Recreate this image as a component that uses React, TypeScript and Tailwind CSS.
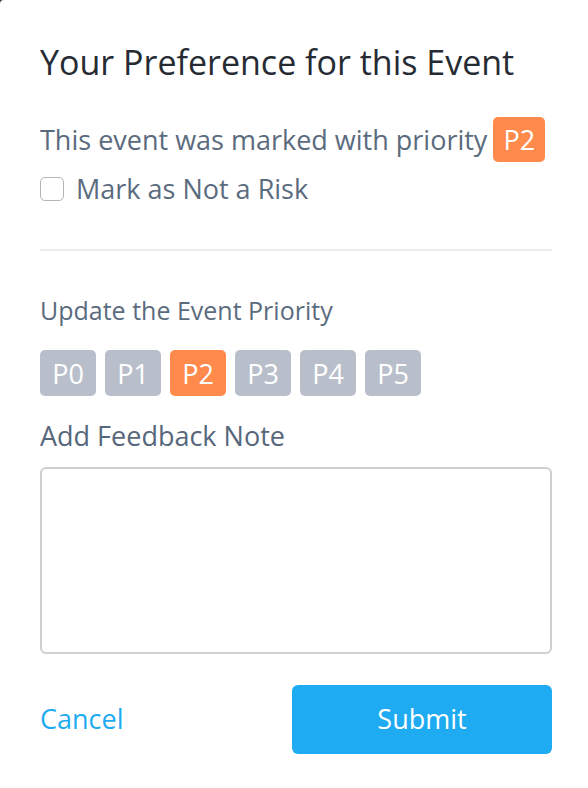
import React, { useState } from 'react';

const priorities = ['P0', 'P1', 'P2', 'P3', 'P4', 'P5'];

export default function App() {
  const [selected, setSelected] = useState('P2');
  const [notRisk, setNotRisk] = useState(false);
  const [note, setNote] = useState('');

  return (
    <div className="min-h-[788px] w-[588px] bg-[#3a3f47]">
      <div
        className="min-h-[788px] rounded-tl-[4px] bg-white pl-10 pr-9 pt-[39px] text-[#5b6b7e]"
        style={{ fontFamily: '"Open Sans", Lato, sans-serif' }}
      >
        <h2 className="text-[34px] leading-[46px] text-[#262b33]">Your Preference for this Event</h2>

        {/* current priority */}
        <div className="mt-[32px] flex items-center gap-[6px]">
          <span className="text-[27px] leading-[45px]">This event was marked with priority</span>
          <span className="rounded-[5px] bg-[#ff8a4c] px-[10px] text-[27px] leading-[45px] text-white">P2</span>
        </div>

        <label className="mt-[9px] flex items-center gap-[12px]">
          <input
            type="checkbox"
            checked={notRisk}
            onChange={(e) => setNotRisk(e.target.checked)}
            className="h-[24px] w-[24px] appearance-none rounded-[5px] border border-[#b5b5b5] bg-white"
          />
          <span className="text-[27px] leading-[36px]">Mark as Not a Risk</span>
        </label>

        <div className="mt-[42px] h-[2px] bg-[#ececec]" />

        <div className="mt-[42px] text-[25px] leading-[34px]">Update the Event Priority</div>

        {/* priority pills */}
        <div className="mt-[23px] flex gap-[9px]">
          {priorities.map((p) => (
            <button
              key={p}
              onClick={() => setSelected(p)}
              className={`h-[46px] w-[56px] rounded-[5px] text-[27px] leading-none text-white ${
                selected === p ? 'bg-[#ff8a4c]' : 'bg-[#b9bfca]'
              }`}
            >
              {p}
            </button>
          ))}
        </div>

        <div className="mt-[22px] text-[27px] font-medium leading-[36px] text-[#56677b]">Add Feedback Note</div>

        <textarea
          value={note}
          onChange={(e) => setNote(e.target.value)}
          className="mt-[13px] block h-[187px] w-full resize-none rounded-[6px] border-2 border-[#cfcfcf] p-3 outline-none"
        />

        {/* actions */}
        <div className="mt-[31px] flex items-center justify-between">
          <button className="text-[27px] text-[#1eabf1]">Cancel</button>
          <button className="h-[69px] w-[260px] rounded-[6px] bg-[#1eabf1] text-[27px] font-medium text-white">
            Submit
          </button>
        </div>
      </div>
    </div>
  );
}
